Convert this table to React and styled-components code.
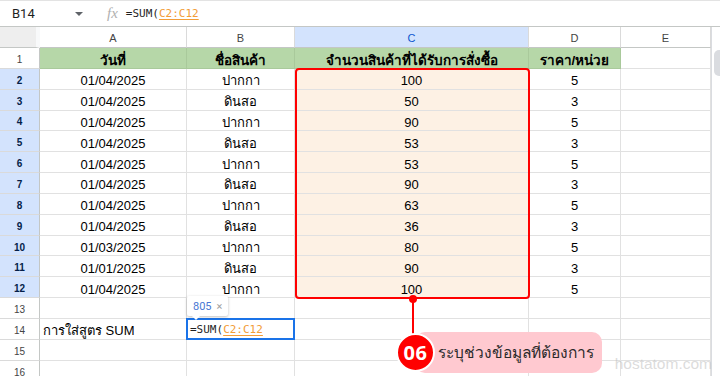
import React from 'react';
import styled, { createGlobalStyle } from 'styled-components';

const GlobalStyle = createGlobalStyle`
  body {
    margin: 0;
    background: #fff;
    font-family: 'Liberation Sans', Arial, sans-serif;
  }
`;

const COLS = ['A', 'B', 'C', 'D', 'E'];
const COL_WIDTHS = '40px 147px 108px 234px 92px 90px';
const ROW_H = 20.85;

const rows = [
  ['01/04/2025', 'ปากกา', '100', '5'],
  ['01/04/2025', 'ดินสอ', '50', '3'],
  ['01/04/2025', 'ปากกา', '90', '5'],
  ['01/04/2025', 'ดินสอ', '53', '3'],
  ['01/04/2025', 'ปากกา', '53', '5'],
  ['01/04/2025', 'ดินสอ', '90', '3'],
  ['01/04/2025', 'ปากกา', '63', '5'],
  ['01/04/2025', 'ดินสอ', '36', '3'],
  ['01/03/2025', 'ปากกา', '80', '5'],
  ['01/01/2025', 'ดินสอ', '90', '3'],
  ['01/04/2025', 'ปากกา', '100', '5'],
];

const Frame = styled.div`
  position: relative;
  width: 720px;
  height: 376px;
  overflow: hidden;
  background: #fff;
`;

const FormulaBar = styled.div`
  display: flex;
  align-items: center;
  box-sizing: border-box;
  height: 27px;
  border-top: 1px solid #e3e3e3;
  border-bottom: 1px solid #c4c7c5;
  font-size: 13px;
  color: #1f1f1f;
`;

const NameBox = styled.div`
  width: 63px;
  padding-left: 12px;
  font-family: Roboto, 'Liberation Sans', sans-serif;
`;

const Caret = styled.span`
  width: 0;
  height: 0;
  border-left: 4px solid transparent;
  border-right: 4px solid transparent;
  border-top: 4px solid #5f6368;
  margin-right: 24px;
`;

const Fx = styled.span`
  font-family: 'Liberation Serif', serif;
  font-style: italic;
  font-size: 15px;
  color: #b0b0b0;
  margin-right: 8px;
`;

const Formula = styled.span`
  font-family: 'DejaVu Sans Mono', monospace;
  font-size: 11px;
  color: #1f1f1f;
`;

const Ref = styled.span`
  color: #f29d38;
  text-decoration: underline;
  text-underline-offset: 2px;
`;

const Body = styled.div`
  display: flex;
`;

const Grid = styled.div`
  display: grid;
  grid-template-columns: ${COL_WIDTHS};
  grid-template-rows: 21px;
  grid-auto-rows: ${ROW_H}px;
  width: 711px;
`;

const Corner = styled.div`
  background: #eeeeee;
  border-right: 4px solid #f8f9fa;
  border-bottom: 1px solid #c4c7c5;
  box-shadow: 1px 0 0 #c4c7c5;
`;

const ColHead = styled.div`
  display: flex;
  align-items: center;
  justify-content: center;
  padding-top: 1px;
  font-size: 11px;
  color: ${(p) => (p.$active ? '#0b57d0' : '#444')};
  background: ${(p) => (p.$active ? '#d3e3fd' : '#fff')};
  border-right: 1px solid #dadada;
  border-bottom: 1px solid #c4c7c5;
`;

const RowHead = styled.div`
  display: flex;
  align-items: center;
  justify-content: center;
  padding-top: 3px;
  font-size: 10px;
  font-weight: ${(p) => (p.$active ? 700 : 400)};
  color: ${(p) => (p.$active ? '#041e49' : '#444')};
  background: ${(p) => (p.$active ? '#d3e3fd' : '#fff')};
  border-right: 1px solid #c4c7c5;
  border-bottom: 1px solid #dadada;
`;

const Cell = styled.div`
  display: flex;
  align-items: center;
  justify-content: ${(p) => (p.$left ? 'flex-start' : 'center')};
  padding: 4px 3px 0;
  overflow: visible;
  white-space: nowrap;
  font-size: ${(p) => (p.$bold ? '13.5px' : '13px')};
  font-weight: ${(p) => (p.$bold ? 700 : 400)};
  color: #000;
  background: ${(p) => p.$fill || '#fff'};
  border-right: 1px solid ${(p) => (p.$bold ? '#a9c99b' : '#e1e1e1')};
  border-bottom: 1px solid ${(p) => (p.$bold ? '#a9c99b' : '#e1e1e1')};
`;

const Scroll = styled.div`
  position: relative;
  flex: 1;
  border-left: 1px solid #dadce0;
  background: #fff;
`;

const Thumb = styled.div`
  position: absolute;
  top: 23px;
  left: 2px;
  right: -4px;
  height: 26px;
  border-radius: 5px;
  background: #dadce0;
`;

const Selection = styled.div`
  position: absolute;
  left: 295px;
  top: 68px;
  width: 235px;
  height: 231px;
  box-sizing: border-box;
  border: 2.5px solid #ff0000;
  border-radius: 4px;
  pointer-events: none;
`;

const Dot = styled.div`
  position: absolute;
  left: 409px;
  top: 295px;
  width: 8px;
  height: 8px;
  border-radius: 50%;
  background: #ff0000;
`;

const Stem = styled.div`
  position: absolute;
  left: 412px;
  top: 299px;
  width: 2px;
  height: 36px;
  background: #ff0000;
`;

const Callout = styled.div`
  position: absolute;
  left: 396px;
  top: 332px;
  display: flex;
  align-items: center;
`;

const Badge = styled.div`
  position: relative;
  z-index: 1;
  display: flex;
  align-items: center;
  justify-content: center;
  width: 35px;
  height: 35px;
  border-radius: 50%;
  background: #ff0000;
  border: 2px solid #fff;
  color: #fff;
  font-family: 'Open Sans', 'Liberation Sans', sans-serif;
  font-weight: 700;
  font-size: 20px;
  letter-spacing: 0.5px;
`;

const Pill = styled.div`
  display: flex;
  align-items: center;
  height: 41px;
  margin-left: -20px;
  padding: 0 8px 0 23px;
  border-radius: 10px;
  background: #ffc9d0;
  font-size: 15.5px;
  color: #2b2b2b;
  white-space: nowrap;
`;

const Editor = styled.div`
  position: absolute;
  left: 186px;
  top: 318px;
  width: 109px;
  height: 22px;
  box-sizing: border-box;
  border: 2px solid #1a73e8;
  background: #fff;
  display: flex;
  align-items: center;
  padding-left: 2px;
`;

const Hint = styled.div`
  position: absolute;
  left: 187px;
  top: 296px;
  display: flex;
  align-items: center;
  gap: 5px;
  height: 20px;
  padding: 0 6px;
  background: #fff;
  border-radius: 2px;
  box-shadow: 0 1px 3px rgba(0, 0, 0, 0.25);
  font-family: Roboto, 'Liberation Sans', sans-serif;
  font-size: 11px;
  color: #4a78d4;

  &::after {
    content: '';
    position: absolute;
    left: 5px;
    bottom: -4px;
    border-left: 4px solid transparent;
    border-right: 4px solid transparent;
    border-top: 4px solid #fff;
  }
`;

const Close = styled.span`
  color: #a0a0a0;
  font-size: 11px;
`;

const Watermark = styled.div`
  position: absolute;
  right: 8px;
  bottom: 3px;
  font-family: 'Liberation Sans', sans-serif;
  font-size: 15.5px;
  color: rgba(190, 190, 190, 0.55);
`;

const HEADERS = ['วันที่', 'ชื่อสินค้า', 'จำนวนสินค้าที่ได้รับการสั่งซื้อ', 'ราคา/หน่วย'];
const GREEN = '#b6d7a8';
const PEACH = '#fdf1e4';

export default function App() {
  const renderRow = (n) => {
    if (n === 1) {
      return [
        <RowHead key="h">1</RowHead>,
        ...HEADERS.map((h) => (
          <Cell key={h} $bold $fill={GREEN}>{h}</Cell>
        )),
        <Cell key="e" />,
      ];
    }
    const data = rows[n - 2];
    if (data) {
      return [
        <RowHead key="h" $active>{n}</RowHead>,
        <Cell key="a">{data[0]}</Cell>,
        <Cell key="b">{data[1]}</Cell>,
        <Cell key="c" $fill={PEACH}>{data[2]}</Cell>,
        <Cell key="d">{data[3]}</Cell>,
        <Cell key="e" />,
      ];
    }
    return [
      <RowHead key="h">{n}</RowHead>,
      <Cell key="a" $left>{n === 14 ? 'การใส่สูตร SUM' : ''}</Cell>,
      <Cell key="b" />,
      <Cell key="c" />,
      <Cell key="d" />,
      <Cell key="e" />,
    ];
  };

  return (
    <Frame>
      <GlobalStyle />
      <FormulaBar>
        <NameBox>B14</NameBox>
        <Caret />
        <Fx>fx</Fx>
        <Formula>
          =SUM(<Ref>C2:C12</Ref>
        </Formula>
      </FormulaBar>
      <Body>
        <Grid>
          <Corner />
          {COLS.map((c) => (
            <ColHead key={c} $active={c === 'C'}>{c}</ColHead>
          ))}
          {Array.from({ length: 16 }, (_, i) => (
            <React.Fragment key={i}>{renderRow(i + 1)}</React.Fragment>
          ))}
        </Grid>
        <Scroll>
          <Thumb />
        </Scroll>
      </Body>

      <Selection />
      <Editor>
        <Formula>
          =SUM(<Ref>C2:C12</Ref>
        </Formula>
      </Editor>
      <Hint>
        805
        <Close>×</Close>
      </Hint>
      <Stem />
      <Dot />
      <Callout>
        <Badge>06</Badge>
        <Pill>ระบุช่วงข้อมูลที่ต้องการ</Pill>
      </Callout>
      <Watermark>hostatom.com</Watermark>
    </Frame>
  );
}
